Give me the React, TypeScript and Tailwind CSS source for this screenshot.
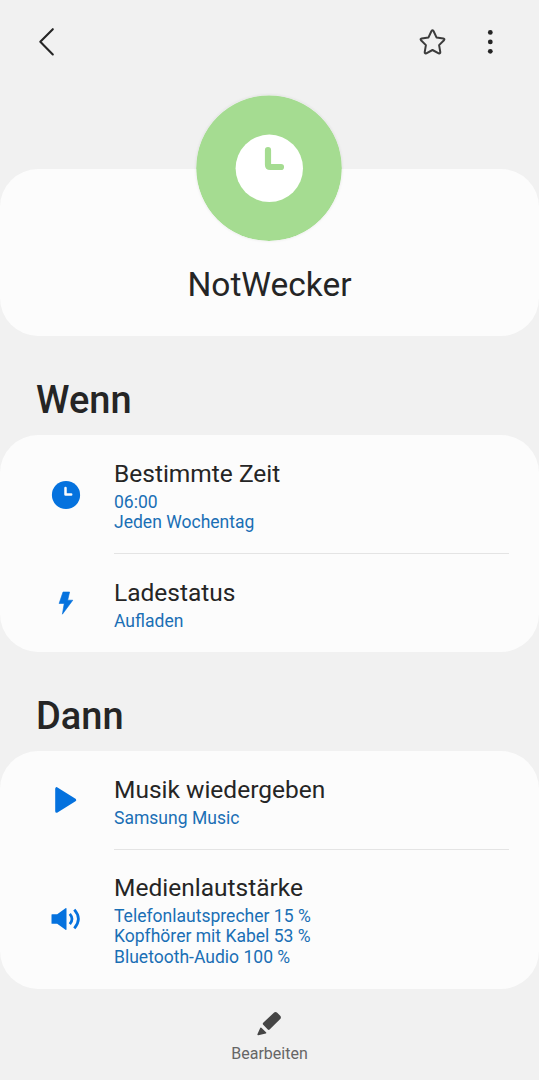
import React from "react";

type RowProps = {
  icon: React.ReactNode;
  title: string;
  lines: string[];
  className: string;
  textClassName: string;
};

function Row({ icon, title, lines, className, textClassName }: RowProps) {
  return (
    <div className={`flex items-center pl-[46px] ${className}`}>
      <div className="flex w-[68px] shrink-0">{icon}</div>
      <div className={`whitespace-nowrap ${textClassName}`}>
        <h3 className="mb-[3px] text-[24.5px] leading-[30px] text-[#252525]">{title}</h3>
        {lines.map((line) => (
          <p key={line} className="text-[17.55px] leading-[20.5px] text-[#1a6fb5]">{line}</p>
        ))}
      </div>
    </div>
  );
}

const ClockIcon = () => (
  <svg viewBox="0 0 40 40" className="mt-[2px] size-10">
    <circle cx="20" cy="20" r="14.1" fill="#0572de" />
    <path d="M19.5 13v6.6h5.7" fill="none" stroke="#fcfcfc" strokeWidth="2.5" strokeLinecap="round" strokeLinejoin="round" />
  </svg>
);

const BoltIcon = () => (
  <svg viewBox="0 0 40 40" className="size-10">
    <path d="M17 9h6.6l-1.9 8.2h5.1L16.4 31.2l1.8-10.7h-5.1z" fill="#0572de" stroke="#0572de" strokeWidth=".6" strokeLinejoin="round" />
  </svg>
);

const PlayIcon = () => (
  <svg viewBox="0 0 40 40" className="size-10">
    <path d="M10.7 8.7v22.6L28.7 20z" fill="#0572de" stroke="#0572de" strokeWidth="3" strokeLinejoin="round" />
  </svg>
);

const SoundIcon = () => (
  <svg viewBox="0 0 40 40" className="-mt-px size-10">
    <path d="M6 15.2h5.2L19.5 9.2q1-.6 1 .6v20.4q0 1.2-1 .6l-8.3-6H6q-.5 0-.5-.5v-8.6q0-.5.5-.5z" fill="#0572de" />
    <path d="M23.8 14.8q4.4 5.2 0 10.4M28.3 10.7q8.2 9.3 0 18.6" fill="none" stroke="#0572de" strokeWidth="2.7" />
  </svg>
);

export default function App() {
  return (
    <main className="flex h-[1080px] w-[539px] flex-col overflow-hidden bg-[#f1f1f1] font-['Roboto',sans-serif]">
      <header className="flex h-[84px] shrink-0 items-center pr-[29px] pl-[30px]">
        <svg viewBox="0 0 32 32" className="size-8" fill="none" stroke="#252525" strokeWidth="2.1" strokeLinecap="round" strokeLinejoin="round">
          <path d="M22.8 3.2L10.3 15.8l12.5 12.6" />
        </svg>
        <svg viewBox="0 0 32 32" className="ml-auto size-8" fill="none" stroke="#3c3c3c" strokeWidth="2" strokeLinejoin="round">
          <path d="M15.5 5Q16.5 3.7 17.5 5l3 6.4 6.8 1q1.8.4.7 1.8l-4.9 4.9 1.2 7q.1 1.8-1.6 1.2l-6.2-3.3-6.2 3.3q-1.7.6-1.6-1.2l1.2-7L5 14.2q-1.1-1.4.7-1.8l6.8-1z" />
        </svg>
        <svg viewBox="0 0 40 32" className="ml-[22px] h-8 w-10" fill="#252525">
          <circle cx="20.3" cy="6.4" r="2.4" /><circle cx="20.3" cy="15.9" r="2.4" /><circle cx="20.3" cy="25.3" r="2.4" />
        </svg>
      </header>
      <section className="mt-[85px] flex h-[167px] shrink-0 flex-col items-center rounded-[38px] bg-[#fcfcfc]">
        <svg viewBox="0 0 146 146" className="-mt-[74px] mr-px size-[146px] shrink-0 rounded-full shadow-[0_0_3px_rgba(0,0,0,0.09)]">
          <circle cx="73" cy="73.2" r="72.8" fill="#a5dc91" />
          <circle cx="73.3" cy="73.3" r="33.7" fill="#fff" />
          <path d="M72 55v14.8q0 2.2 2.2 2.2H85" fill="none" stroke="#a5dc91" strokeWidth="6.2" strokeLinecap="round" />
        </svg>
        <h1 className="mt-[23px] text-[33.5px] leading-[42px] text-[#252525]">NotWecker</h1>
      </section>
      <h2 className="mt-[39px] h-[60px] shrink-0 pl-[36px] text-[38px] leading-[50px] font-medium text-[#252525]">Wenn</h2>
      <section className="flex h-[217px] shrink-0 flex-col rounded-[38px] bg-[#fcfcfc]">
        <Row className="h-[118px]" textClassName="pt-[3px]" icon={<ClockIcon />} title="Bestimmte Zeit" lines={["06:00", "Jeden Wochentag"]} />
        <hr className="mr-[30px] ml-[114px] border-[#e4e4e4]" />
        <Row className="h-[98px]" textClassName="pt-[4px]" icon={<BoltIcon />} title="Ladestatus" lines={["Aufladen"]} />
      </section>
      <h2 className="mt-[39px] h-[60px] shrink-0 pl-[36px] text-[38px] leading-[50px] font-medium text-[#252525]">Dann</h2>
      <section className="flex h-[238px] shrink-0 flex-col rounded-[38px] bg-[#fcfcfc]">
        <Row className="h-[97.5px]" textClassName="pt-[4px]" icon={<PlayIcon />} title="Musik wiedergeben" lines={["Samsung Music"]} />
        <hr className="mr-[30px] ml-[114px] border-[#e4e4e4]" />
        <Row className="h-[139.5px]" textClassName="pt-[1px]" icon={<SoundIcon />} title="Medienlautstärke" lines={["Telefonlautsprecher 15 %", "Kopfhörer mit Kabel 53 %", "Bluetooth-Audio 100 %"]} />
      </section>
      <footer className="flex flex-col items-center pt-[20px]">
        <svg viewBox="0 0 28 28" className="mr-px size-7" fill="#454545">
          <path d="M8.2 13.7L18.6 4q1.8-1.7 3.6-.2l3 3q1.5 1.7-.2 3.4L14.6 20.6q-.9.8-1.8 0l-4.6-4.8q-.9-1.1 0-2.1zM5.2 19q.5-.9 1.2-.2l4.6 4.5q.7.8-.2 1.1l-7.5 1.9q-1.1.1-.9-1z" />
        </svg>
        <span className="mt-[7px] text-[16px] leading-[20px] text-[#666]">Bearbeiten</span>
      </footer>
    </main>
  );
}
